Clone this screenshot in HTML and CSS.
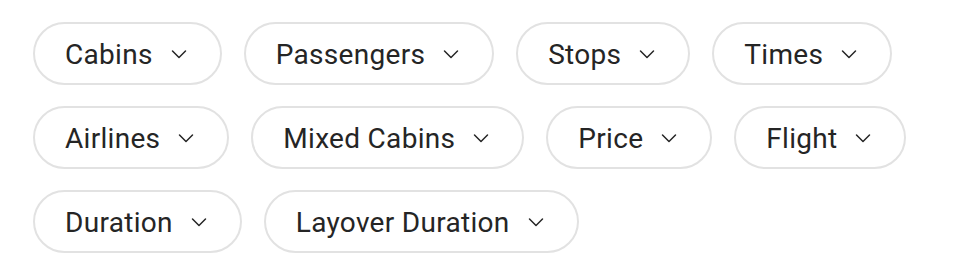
FILE: index.html
```html
<!DOCTYPE html>
<html>
<head>
<meta charset="utf-8">
<link rel="stylesheet" href="styles.css">
</head>
<body>
<div class="filters">
  <button class="pill"><span>Cabins</span><svg class="chev" viewBox="0 0 24 24"><path d="M5.5 9 12 15.5 18.5 9"/></svg></button>
  <button class="pill"><span>Passengers</span><svg class="chev" viewBox="0 0 24 24"><path d="M5.5 9 12 15.5 18.5 9"/></svg></button>
  <button class="pill"><span>Stops</span><svg class="chev" viewBox="0 0 24 24"><path d="M5.5 9 12 15.5 18.5 9"/></svg></button>
  <button class="pill"><span>Times</span><svg class="chev" viewBox="0 0 24 24"><path d="M5.5 9 12 15.5 18.5 9"/></svg></button>
  <button class="pill"><span>Airlines</span><svg class="chev" viewBox="0 0 24 24"><path d="M5.5 9 12 15.5 18.5 9"/></svg></button>
  <button class="pill"><span>Mixed Cabins</span><svg class="chev" viewBox="0 0 24 24"><path d="M5.5 9 12 15.5 18.5 9"/></svg></button>
  <button class="pill"><span>Price</span><svg class="chev" viewBox="0 0 24 24"><path d="M5.5 9 12 15.5 18.5 9"/></svg></button>
  <button class="pill"><span>Flight</span><svg class="chev" viewBox="0 0 24 24"><path d="M5.5 9 12 15.5 18.5 9"/></svg></button>
  <button class="pill"><span>Duration</span><svg class="chev" viewBox="0 0 24 24"><path d="M5.5 9 12 15.5 18.5 9"/></svg></button>
  <button class="pill"><span>Layover Duration</span><svg class="chev" viewBox="0 0 24 24"><path d="M5.5 9 12 15.5 18.5 9"/></svg></button>
</div>
</body>
</html>
```
FILE: styles.css
```css
html, body {
  margin: 0;
  padding: 0;
  background: #ffffff;
}
.filters {
  display: flex;
  flex-wrap: wrap;
  column-gap: 22px;
  row-gap: 21px;
  padding: 22px 20px 0 33px;
  width: 954px;
  box-sizing: border-box;
}
.pill {
  display: inline-flex;
  align-items: center;
  height: 63px;
  box-sizing: border-box;
  padding: 0 29px 0 30px;
  border: 2px solid #e2e2e2;
  border-radius: 32px;
  background: #fff;
  font-family: Roboto, "Noto Sans", sans-serif;
  font-size: 28px;
  font-weight: 400;
  letter-spacing: 0.3px;
  color: #252525;
  cursor: pointer;
}
.pill span {
  line-height: 1;
  margin-top: 3px;
}
.chev {
  width: 24px;
  height: 24px;
  margin-left: 14px;
  fill: none;
  stroke: #252525;
  stroke-width: 1.5;
  stroke-linecap: round;
  stroke-linejoin: round;
}
```
